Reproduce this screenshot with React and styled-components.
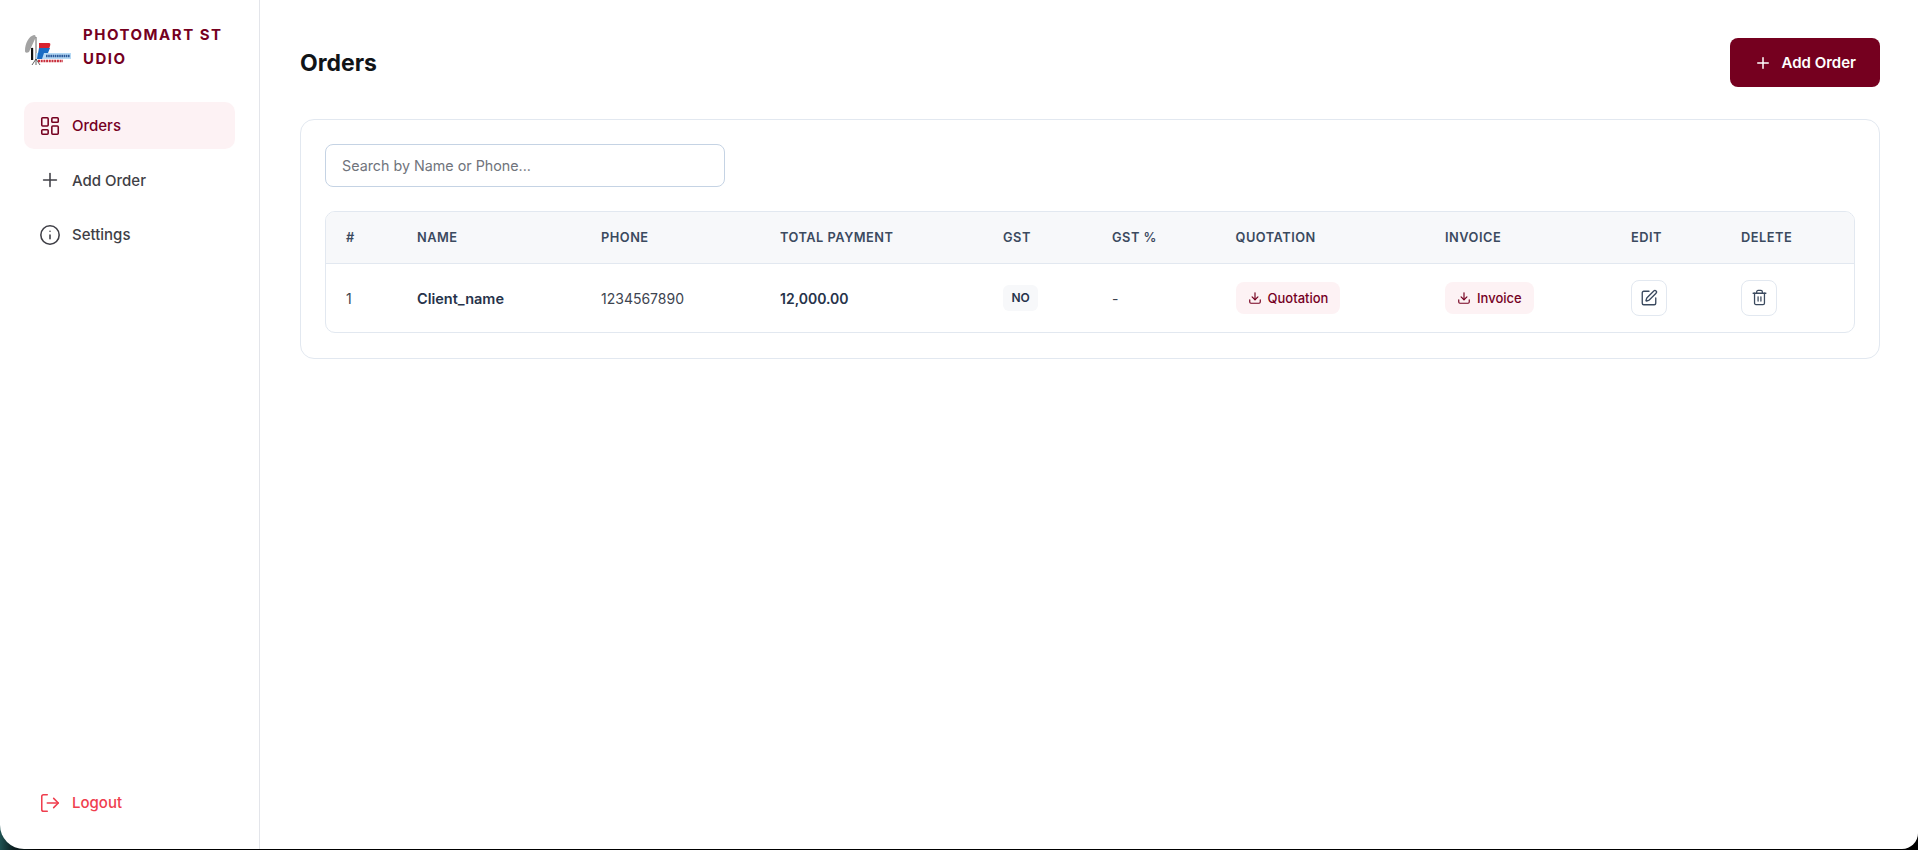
import React from 'react';
import styled, { createGlobalStyle } from 'styled-components';
import { LayoutDashboard, Plus, Info, LogOut, Download, SquarePen, Trash2 } from 'lucide-react';

const primary = '#75001f';
const tint = '#fdf2f4';
const line = '#e2e8f0';

const GlobalStyle = createGlobalStyle`
  html, body {
    margin: 0;
    height: 100%;
    overflow: hidden;
    background: linear-gradient(90deg, #1f5252 0, #0a1c1e 14px, #000 40px);
    font-family: Inter, "Liberation Sans", sans-serif;
  }
  * { box-sizing: border-box; }
`;

const Layout = styled.div`
  display: flex;
  height: 849px;
  background: #fff;
  border-bottom-left-radius: 24px;
  border-bottom-right-radius: 16px;
  overflow: hidden;
`;

const Sidebar = styled.aside`
  width: 260px;
  flex-shrink: 0;
  display: flex;
  flex-direction: column;
  padding: 19px 24px 23px;
  border-right: 1px solid #e3e5ea;
`;

const Brand = styled.div`
  display: flex;
  align-items: center;
  gap: 11px;
  margin-bottom: 27px;
  height: 56px;
`;

const LogoMark = styled.svg`
  flex-shrink: 0;
  margin-top: 5px;
`;

const BrandName = styled.div`
  width: 144px;
  font-size: 15px;
  line-height: 24px;
  font-weight: 700;
  letter-spacing: 1.5px;
  color: ${primary};
  word-break: break-all;
`;

const Nav = styled.nav`
  display: flex;
  flex-direction: column;
  gap: 7.5px;
`;

const NavItem = styled.a`
  display: flex;
  align-items: center;
  gap: 11px;
  height: 47px;
  padding: 0 15px;
  border-radius: 10px;
  font-size: 15px;
  font-weight: 500;
  color: ${({ $active, $danger }) => ($danger ? '#ef3e4e' : $active ? primary : '#3f3f46')};
  background: ${({ $active }) => ($active ? tint : 'transparent')};
  svg { flex-shrink: 0; }
`;

const Logout = styled(NavItem)`
  margin-top: auto;
`;

const Main = styled.main`
  flex: 1;
  min-width: 0;
  padding: 38px 38px 0 40px;
`;

const Header = styled.header`
  display: flex;
  justify-content: space-between;
  align-items: center;
  margin-bottom: 32px;
`;

const Title = styled.h1`
  margin: 0;
  font-size: 23px;
  font-weight: 700;
  color: #111418;
`;

const AddButton = styled.button`
  display: flex;
  align-items: center;
  gap: 9px;
  height: 49px;
  padding: 0 24px;
  border: none;
  border-radius: 8px;
  background: ${primary};
  color: #fff;
  font-family: inherit;
  font-size: 15px;
  font-weight: 600;
`;

const Card = styled.section`
  border: 1px solid ${line};
  border-radius: 14px;
  padding: 24px 24px 25px;
`;

const Search = styled.input`
  display: block;
  width: 400px;
  height: 43px;
  padding: 0 16px;
  margin-bottom: 24px;
  border: 1px solid #c5d3e4;
  border-radius: 8px;
  font-family: inherit;
  font-size: 14.3px;
  color: #1e293b;
  &::placeholder { color: #70747c; opacity: 1; }
`;

const TableWrap = styled.div`
  border: 1px solid ${line};
  border-radius: 10px;
  overflow: hidden;
`;

const Table = styled.table`
  width: 100%;
  border-collapse: collapse;
  table-layout: fixed;
`;

const Th = styled.th`
  height: 51px;
  padding: 1px 20px 0;
  text-align: left;
  background: #f7f8fa;
  border-bottom: 1px solid ${line};
  font-size: 12.8px;
  font-weight: 600;
  letter-spacing: 0.5px;
  text-transform: uppercase;
  color: #3b4a5f;
`;

const Td = styled.td`
  height: 69px;
  padding: 2px 20px 0;
  font-size: 14px;
  font-weight: ${({ $strong }) => ($strong ? 600 : 400)};
  color: ${({ $strong }) => ($strong ? '#26334a' : '#3d4450')};
`;

const NameCell = styled(Td)`
  font-size: 14.5px;
`;

const Badge = styled.span`
  display: inline-flex;
  align-items: center;
  height: 26px;
  padding: 0 8.5px;
  margin-bottom: 2px;
  vertical-align: middle;
  border-radius: 6px;
  background: #f7f8fa;
  font-size: 12px;
  font-weight: 600;
  color: #26334a;
`;

const DocButton = styled.a`
  display: inline-flex;
  align-items: center;
  gap: 6px;
  height: 32px;
  padding: 0 12px;
  margin-bottom: 2px;
  vertical-align: middle;
  border-radius: 8px;
  background: ${tint};
  font-size: 13px;
  font-weight: 500;
  color: ${primary};
`;

const IconButton = styled.button`
  display: flex;
  align-items: center;
  justify-content: center;
  width: 36px;
  height: 36px;
  padding: 0;
  margin-bottom: 2px;
  border: 1px solid ${line};
  border-radius: 8px;
  background: #fff;
  color: #3b4a5f;
`;

const columns = [
  { label: '#', width: 71 },
  { label: 'Name', width: 184 },
  { label: 'Phone', width: 179 },
  { label: 'Total Payment', width: 223 },
  { label: 'GST', width: 109 },
  { label: 'GST %', width: 123.5 },
  { label: 'Quotation', width: 209.5 },
  { label: 'Invoice', width: 186 },
  { label: 'Edit', width: 110 },
  { label: 'Delete', width: 133 },
];

const Logo = () => (
  <LogoMark width="48" height="32" viewBox="0 0 48 32" aria-hidden="true">
    <path d="M1 17 C1 9 5 2 10 1 C12 1 12 3 11 5 L5 18 C3 19 1 19 1 17 Z" fill="#a3a3a3" />
    <path d="M12 3 V25 M12 25 L8 31 M12 25 L16 31 M12 25 V31" stroke="#3a3a3a" strokeWidth="0.8" fill="none" />
    <rect x="7" y="16" width="2.2" height="10" fill="#111" />
    <circle cx="8.1" cy="15" r="1.2" fill="#111" />
    <rect x="12" y="19" width="35" height="6" fill="#b5d9f5" />
    <path d="M15 9 H25 Q27 9 26 12 L25 15 H15 Z" fill="#d8232f" />
    <path d="M15 14 H26 L24 19 H20 L18 25 H13 Z" fill="#1a6cc4" />
    <path d="M22 22 H46" stroke="#2c5a9a" strokeWidth="2.4" strokeDasharray="1.6 0.6" />
    <path d="M14 27 H39" stroke="#c9303d" strokeWidth="2.4" strokeDasharray="2 0.7" />
  </LogoMark>
);

export default function App() {
  return (
    <>
      <GlobalStyle />
      <Layout>
        <Sidebar>
          <Brand>
            <Logo />
            <BrandName>PHOTOMART STUDIO</BrandName>
          </Brand>
          <Nav>
            <NavItem $active><LayoutDashboard size={22} strokeWidth={1.7} />Orders</NavItem>
            <NavItem><Plus size={22} strokeWidth={1.7} />Add Order</NavItem>
            <NavItem><Info size={22} strokeWidth={1.7} />Settings</NavItem>
          </Nav>
          <Logout $danger><LogOut size={22} strokeWidth={1.7} />Logout</Logout>
        </Sidebar>
        <Main>
          <Header>
            <Title>Orders</Title>
            <AddButton><Plus size={18} strokeWidth={2} />Add Order</AddButton>
          </Header>
          <Card>
            <Search placeholder="Search by Name or Phone..." />
            <TableWrap>
              <Table>
                <colgroup>
                  {columns.map((c) => <col key={c.label} width={c.width} />)}
                </colgroup>
                <thead>
                  <tr>
                    {columns.map((c) => <Th key={c.label}>{c.label}</Th>)}
                  </tr>
                </thead>
                <tbody>
                  <tr>
                    <Td>1</Td>
                    <NameCell $strong>Client_name</NameCell>
                    <Td>1234567890</Td>
                    <Td $strong>12,000.00</Td>
                    <Td><Badge>NO</Badge></Td>
                    <Td>-</Td>
                    <Td><DocButton><Download size={14} />Quotation</DocButton></Td>
                    <Td><DocButton><Download size={14} />Invoice</DocButton></Td>
                    <Td><IconButton><SquarePen size={18} strokeWidth={1.8} /></IconButton></Td>
                    <Td><IconButton><Trash2 size={17} strokeWidth={1.8} /></IconButton></Td>
                  </tr>
                </tbody>
              </Table>
            </TableWrap>
          </Card>
        </Main>
      </Layout>
    </>
  );
}
